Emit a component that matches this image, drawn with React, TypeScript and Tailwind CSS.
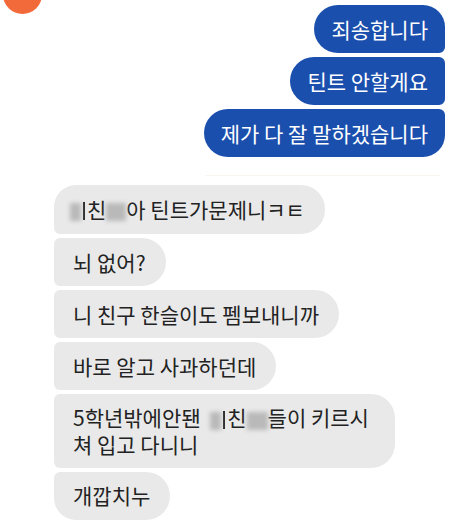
import React from "react";

const font = { fontFamily: '"Noto Sans CJK KR", "Noto Sans", sans-serif' };

function Blur({ w }: { w: number }) {
  return (
    <span className="inline-block align-middle relative" style={{ width: w, height: 22 }}>
      <span className="absolute inset-x-0 top-[2px] bottom-[2px] bg-[#b9b9b9] blur-[2px]" />
    </span>
  );
}

function Bar() {
  return <span className="inline-block align-middle w-[2px] h-[18px] bg-[#2a2a2a] mx-[2px] mb-[2px]" />;
}

export default function App() {
  return (
    <div className="w-[460px] h-[526px] bg-white relative overflow-hidden text-[21px] leading-[25px]" style={font}>
      <div className="absolute left-[3px] top-[-25px] w-[39px] h-[39px] rounded-full bg-[#f36a3a]" />
      <div className="flex flex-col items-end gap-[4px] pt-[5px] pr-[15px]">
        <div className="bg-[#1a4fae] text-white px-[17px] py-[11.5px] rounded-l-[24px] rounded-tr-[22px] rounded-br-[6px]">죄송합니다</div>
        <div className="bg-[#1a4fae] text-white px-[17px] py-[11.5px] rounded-l-[24px] rounded-r-[6px]">틴트 안할게요</div>
        <div className="bg-[#1a4fae] text-white px-[17px] py-[11.5px] rounded-l-[24px] rounded-tr-[6px] rounded-br-[22px]">제가 다 잘 말하겠습니다</div>
      </div>
      <div className="mt-[18px] ml-[205px] mr-[20px] h-px bg-[#f7f5ee]" />
      <div className="flex flex-col items-start gap-[4px] pt-[9px] pl-[54px] text-[#222]">
        <div className="bg-[#e9e9e9] pl-[16px] pr-[20px] py-[11.5px] rounded-r-[24px] rounded-tl-[22px] rounded-bl-[6px] whitespace-nowrap">
          <Blur w={11} />
          <Bar />
          친<Blur w={20} />아 틴트가문제니ㅋㅌ
        </div>
        <div className="bg-[#e9e9e9] pl-[19px] pr-[20px] py-[11.5px] rounded-r-[24px] rounded-l-[6px]">뇌 없어?</div>
        <div className="bg-[#e9e9e9] pl-[19px] pr-[20px] py-[11.5px] rounded-r-[24px] rounded-l-[6px]">니 친구 한슬이도 펨보내니까</div>
        <div className="bg-[#e9e9e9] pl-[19px] pr-[20px] py-[11.5px] rounded-r-[24px] rounded-l-[6px]">바로 알고 사과하던데</div>
        <div className="bg-[#e9e9e9] pl-[19px] pr-[26px] py-[11px] rounded-r-[24px] rounded-l-[6px] whitespace-nowrap">
          5학년밖에안됀 <span className="inline-block w-[5px]" />
          <Blur w={11} />
          <Bar />
          친<Blur w={21} />들이 키르시
          <br />쳐 입고 다니니
        </div>
        <div className="bg-[#e9e9e9] pl-[19px] pr-[20px] py-[11.5px] rounded-r-[24px] rounded-tl-[6px] rounded-bl-[22px]">개깝치누</div>
      </div>
    </div>
  );
}
